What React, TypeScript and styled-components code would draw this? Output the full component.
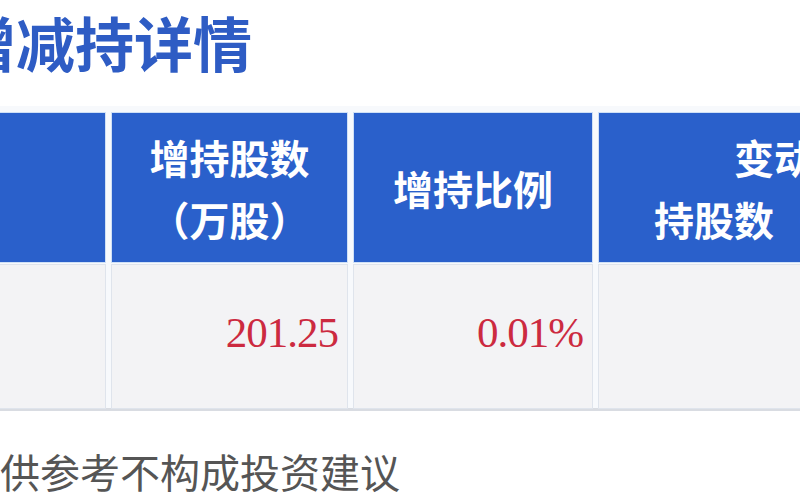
import React from "react";
import styled, { createGlobalStyle } from "styled-components";

const Global = createGlobalStyle`
  html, body { margin: 0; padding: 0; background: #ffffff; }
  body { width: 800px; height: 500px; overflow: hidden; font-family: "Noto Sans CJK SC", "Noto Sans", sans-serif; }
`;

const Page = styled.div`
  width: 800px;
  height: 500px;
  overflow: hidden;
  position: relative;
  background: #ffffff;
`;

const Title = styled.h1`
  margin: 0;
  padding-top: 6px;
  margin-left: -43px;
  height: 106px;
  box-sizing: border-box;
  font-family: "Noto Sans CJK SC", sans-serif;
  font-weight: 700;
  font-size: 59px;
  line-height: 72px;
  color: #2e5cc4;
  white-space: nowrap;
`;

const Table = styled.div`
  display: grid;
  grid-template-columns: 105px 235px 238px 390px;
  grid-template-rows: 149px 143px;
  column-gap: 7px;
  row-gap: 3px;
  padding-top: 7px;
  border-bottom: 3px solid #d9dce2;
  width: 1000px;
  background: #f7f9fc;
`;

const HeadCell = styled.div`
  background: #2a60cb;
  color: #ffffff;
  font-family: "Noto Sans CJK SC", sans-serif;
  font-weight: 700;
  font-size: 40px;
  line-height: 62px;
  display: flex;
  align-items: center;
  justify-content: center;
  text-align: center;
  padding: 0 30px;
  box-shadow: 0 0 0 1px #cfe0f6;
`;

const BodyCell = styled.div<{ $align?: "right" | "left" }>`
  background: #f3f3f5;
  display: flex;
  align-items: center;
  justify-content: ${(p) => (p.$align === "right" ? "flex-end" : "flex-start")};
  padding: 0 9px 0 0;
  box-shadow: 0 0 0 1px #dfe4ec;
`;

const Value = styled.span`
  font-family: "Liberation Serif", "Times New Roman", serif;
  font-size: 43px;
  letter-spacing: -1px;
  color: #cc2a40;
  margin-top: -8px;
`;

const Footer = styled.div`
  margin-top: 36px;
  margin-left: -120px;
  font-family: "Noto Sans CJK SC", sans-serif;
  font-size: 40px;
  line-height: 48px;
  color: #555555;
  white-space: nowrap;
`;

export default function App() {
  return (
    <Page>
      <Global />
      <Title>增减持详情</Title>
      <Table>
        <HeadCell />
        <HeadCell>增持股数（万股）</HeadCell>
        <HeadCell>增持比例</HeadCell>
        <HeadCell>
          变动后
          <br />
          持股数（万股）
        </HeadCell>
        <BodyCell />
        <BodyCell $align="right">
          <Value>201.25</Value>
        </BodyCell>
        <BodyCell $align="right">
          <Value>0.01%</Value>
        </BodyCell>
        <BodyCell />
      </Table>
      <Footer>数据仅供参考不构成投资建议</Footer>
    </Page>
  );
}
